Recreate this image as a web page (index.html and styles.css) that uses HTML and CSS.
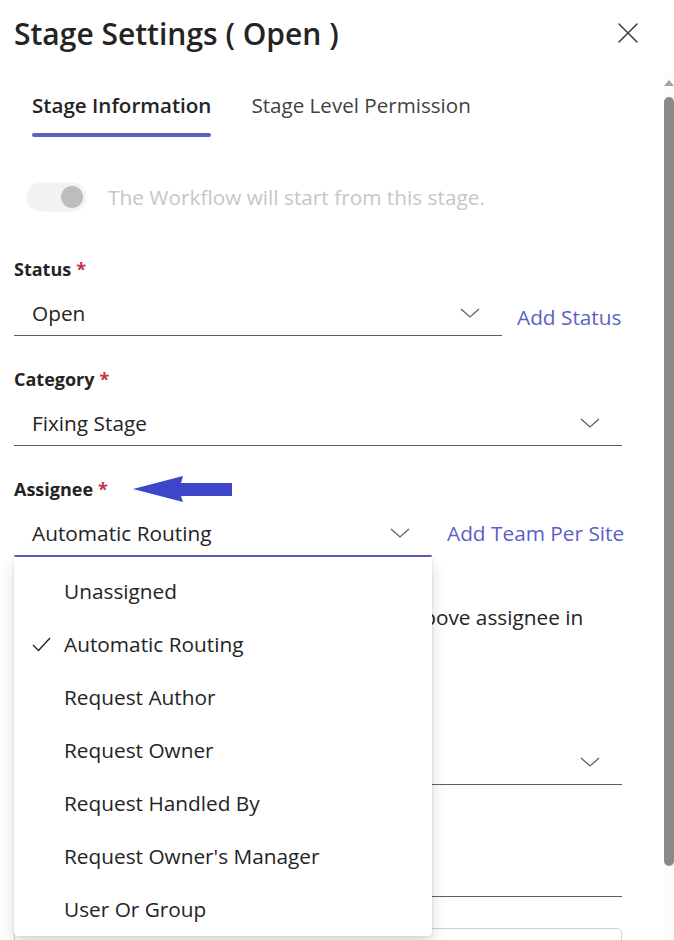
FILE: index.html
```html
<!DOCTYPE html>
<html lang="en">
<head>
<meta charset="utf-8">
<title>Stage Settings</title>
<link rel="stylesheet" href="styles.css">
</head>
<body>
<div class="panel">
  <header class="head">
    <h1 class="title">Stage Settings ( Open )</h1>
    <span class="close" aria-label="Close">
      <svg width="20" height="20" viewBox="0 0 20 20"><path d="M1 1 L19 19 M19 1 L1 19" stroke="#424242" stroke-width="1.6" fill="none" stroke-linecap="round"/></svg>
    </span>
  </header>
  <div class="main">
    <div class="content">
      <nav class="tabs">
        <span class="tab active">Stage Information</span>
        <span class="tab">Stage Level Permission</span>
      </nav>

      <div class="toggle-row">
        <span class="toggle"><span class="knob"></span></span>
        <span class="toggle-text">The Workflow will start from this stage.</span>
      </div>

      <div class="field first">
        <div class="label">Status <span class="req">*</span></div>
        <div class="field-row">
          <div class="select w-status">
            <span class="value">Open</span>
            <svg class="chev" width="20" height="10" viewBox="0 0 20 10"><polyline points="1,1 10,9 19,1" fill="none" stroke="#616161" stroke-width="1.3"/></svg>
          </div>
          <span class="link low">Add Status</span>
        </div>
      </div>

      <div class="field">
        <div class="label">Category <span class="req">*</span></div>
        <div class="select w-full">
          <span class="value">Fixing Stage</span>
          <svg class="chev" width="20" height="10" viewBox="0 0 20 10"><polyline points="1,1 10,9 19,1" fill="none" stroke="#616161" stroke-width="1.3"/></svg>
        </div>
      </div>

      <div class="field">
        <div class="label">Assignee <span class="req">*</span>
          <svg class="pointer" width="100" height="27" viewBox="0 0 100 27"><polygon points="0,13 50,0 48,7 99,7 99,20 48,20 50,26" fill="#3d46c9"/></svg>
        </div>
        <div class="field-row">
          <div class="select-wrap">
            <div class="select open w-assignee">
              <span class="value">Automatic Routing</span>
              <svg class="chev" width="20" height="10" viewBox="0 0 20 10"><polyline points="1,1 10,9 19,1" fill="none" stroke="#616161" stroke-width="1.3"/></svg>
            </div>
            <ul class="menu">
              <li class="item"><span class="check"></span>Unassigned</li>
              <li class="item selected"><span class="check"><svg width="19" height="15" viewBox="0 0 19 15"><polyline points="1,8 6.5,13.5 18,1" fill="none" stroke="#242424" stroke-width="1.4"/></svg></span>Automatic Routing</li>
              <li class="item"><span class="check"></span>Request Author</li>
              <li class="item"><span class="check"></span>Request Owner</li>
              <li class="item"><span class="check"></span>Request Handled By</li>
              <li class="item"><span class="check"></span>Request Owner's Manager</li>
              <li class="item"><span class="check"></span>User Or Group</li>
            </ul>
          </div>
          <span class="link">Add Team Per Site</span>
        </div>
      </div>

      <div class="notify">
        <span class="notify-box"></span>
        <span class="notify-text">Send a chat notification to the above assignee in<br>Microsoft Teams.</span>
      </div>

      <div class="field later">
        <div class="label">Escalation</div>
        <div class="select w-full">
          <span class="value">Select</span>
          <svg class="chev" width="20" height="10" viewBox="0 0 20 10"><polyline points="1,1 10,9 19,1" fill="none" stroke="#616161" stroke-width="1.3"/></svg>
        </div>
      </div>

      <div class="field input-field">
        <div class="label">Due In (Days)</div>
        <div class="select w-full"><span class="value">&nbsp;</span></div>
      </div>

      <div class="box"></div>
    </div>
    <div class="scrollbar">
      <span class="arrow"></span>
      <span class="thumb"></span>
    </div>
  </div>
</div>
</body>
</html>
```

FILE: styles.css
```css
* { box-sizing: border-box; }

html, body {
  margin: 0;
  padding: 0;
  background: #ffffff;
}

body {
  width: 674px;
  height: 940px;
  overflow: hidden;
  font-family: "Open Sans", "Noto Sans", sans-serif;
  color: #242424;
}

.panel {
  display: flex;
  flex-direction: column;
  height: 940px;
}

.head {
  display: flex;
  justify-content: space-between;
  align-items: flex-start;
  padding: 16px 36px 20px 14px;
  height: 72px;
}

.title {
  margin: 0;
  font-size: 30px;
  line-height: 36px;
  font-weight: 600;
  color: #242424;
}

.close {
  display: flex;
  margin-top: 7px;
}

.main {
  display: flex;
  flex: 1;
  overflow: hidden;
}

.content {
  flex: 1;
  padding: 19px 40px 0 14px;
}

.tabs {
  display: flex;
  gap: 40px;
  padding-left: 18px;
}

.tab {
  position: relative;
  font-size: 20.6px;
  line-height: 28px;
  padding-bottom: 18px;
  color: #424242;
}

.tab.active {
  font-weight: 600;
  color: #242424;
}

.tab.active::after {
  content: "";
  position: absolute;
  left: 0;
  right: 0;
  bottom: 0;
  height: 4px;
  border-radius: 2px;
  background: #5b5fc7;
}

.toggle-row {
  display: flex;
  align-items: center;
  margin-top: 46px;
  height: 28px;
}

.toggle {
  display: flex;
  justify-content: flex-end;
  align-items: center;
  width: 59px;
  height: 28px;
  margin-left: 13px;
  padding-right: 3px;
  border-radius: 14px;
  background: #f2f2f2;
  box-shadow: 0 0 3px rgba(0,0,0,0.06);
}

.knob {
  width: 22px;
  height: 22px;
  border-radius: 50%;
  background: #bdbdbd;
}

.toggle-text {
  margin-left: 22px;
  font-size: 20.8px;
  line-height: 28px;
  color: #c6c6c6;
}

.field { margin-top: 31px; }
.field.first { margin-top: 46px; }
.field.later { margin-top: 47px; }
.field.input-field { margin-top: 33px; }

.label {
  display: flex;
  align-items: center;
  font-size: 18px;
  line-height: 24px;
  font-weight: 700;
  color: #242424;
  height: 24px;
}

.req {
  color: #c4314b;
  margin-left: 5px;
}

.pointer {
  margin-left: 25px;
}

.field-row {
  display: flex;
  align-items: flex-start;
}

.select {
  display: flex;
  align-items: center;
  justify-content: space-between;
  margin-top: 16px;
  padding: 2px 22px 8px 18px;
  border-bottom: 1px solid #616161;
  font-size: 20.8px;
  line-height: 28px;
}

.select.open {
  border-bottom: 2px solid #5b5fc7;
  border-radius: 0 0 2px 2px;
}

.w-status { width: 488px; flex: none; }
.w-full { width: 608px; }
.w-assignee { width: 418px; }

.select-wrap {
  position: relative;
  flex: none;
}

.link {
  margin-left: 15px;
  margin-top: 18px;
  font-size: 20.8px;
  line-height: 28px;
  color: #5b5fc7;
  white-space: nowrap;
}

.link.low { margin-top: 22px; }

.menu {
  position: absolute;
  top: 100%;
  left: 0;
  width: 418px;
  margin: 0;
  padding: 8px 0 0;
  list-style: none;
  background: #ffffff;
  border-radius: 0 0 4px 4px;
  box-shadow: 0 8px 16px rgba(0,0,0,0.14), 0 0 3px rgba(0,0,0,0.12);
  z-index: 5;
}

.item {
  display: flex;
  align-items: center;
  height: 53px;
  padding-left: 18px;
  font-size: 20.8px;
  line-height: 53px;
  color: #242424;
}

.check {
  display: flex;
  align-items: center;
  width: 32px;
  height: 53px;
}

.notify {
  display: flex;
  align-items: flex-start;
  margin-top: 46px;
}

.notify-box {
  width: 20px;
  height: 20px;
  margin-top: 4px;
  margin-right: 82px;
  border: 1px solid #616161;
  border-radius: 2px;
  flex: none;
}

.notify-text {
  font-size: 20.8px;
  line-height: 28px;
  color: #242424;
  white-space: nowrap;
}

.box {
  margin-top: 31px;
  width: 608px;
  height: 44px;
  border: 1px solid #d1d1d1;
  border-radius: 5px;
}

.scrollbar {
  width: 12px;
  display: flex;
  flex-direction: column;
  align-items: center;
  padding-top: 8px;
  background: #fcfcfc;
}

.arrow {
  width: 0;
  height: 0;
  border-left: 5px solid transparent;
  border-right: 5px solid transparent;
  border-bottom: 6px solid #a3a3a3;
}

.thumb {
  margin-top: 11px;
  width: 10px;
  height: 769px;
  border-radius: 5px;
  background: #8a8a8a;
}
```
